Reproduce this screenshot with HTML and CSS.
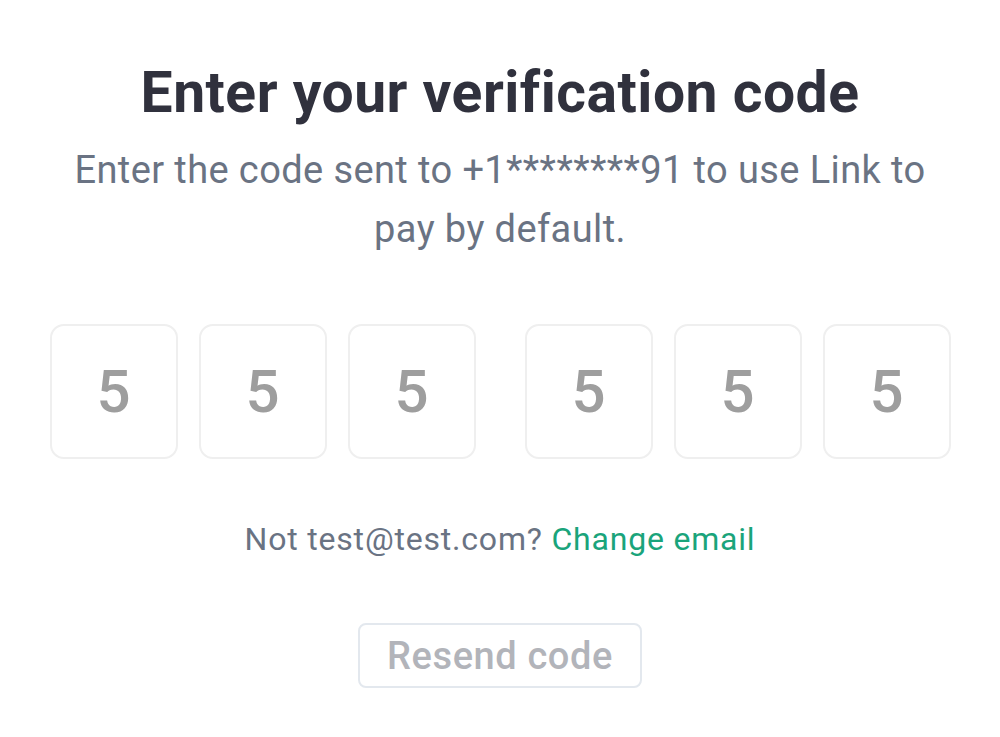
FILE: index.html
```html
<!DOCTYPE html>
<html>
<head>
<meta charset="utf-8">
<link rel="stylesheet" href="styles.css">
</head>
<body>
<main class="page">
  <h1 class="title">Enter your verification code</h1>
  <p class="subtitle">Enter the code sent to +1********91 to use Link to pay by default.</p>
  <div class="code">
    <div class="group">
      <div class="digit">5</div>
      <div class="digit">5</div>
      <div class="digit">5</div>
    </div>
    <div class="group">
      <div class="digit">5</div>
      <div class="digit">5</div>
      <div class="digit">5</div>
    </div>
  </div>
  <p class="email">Not test@test.com? <a class="link" href="#">Change email</a></p>
  <button class="resend" type="button">Resend code</button>
</main>
</body>
</html>
```
FILE: styles.css
```css
html, body {
  margin: 0;
  padding: 0;
  background: #ffffff;
}
body {
  font-family: Roboto, "Liberation Sans", sans-serif;
}
.page {
  width: 1000px;
  display: flex;
  flex-direction: column;
  align-items: center;
  padding-top: 59px;
}
.title {
  margin: 0;
  font-size: 57px;
  line-height: 67px;
  font-weight: 700;
  letter-spacing: 0.5px;
  color: #30313d;
  text-align: center;
}
.subtitle {
  margin: 15px 0 0;
  width: 880px;
  font-size: 38px;
  line-height: 59px;
  letter-spacing: 0.4px;
  color: #6a7383;
  text-align: center;
}
.code {
  margin-top: 65px;
  display: flex;
  gap: 49px;
}
.group {
  display: flex;
  gap: 21px;
}
.digit {
  box-sizing: border-box;
  width: 128px;
  height: 135px;
  border: 2px solid #efefef;
  border-radius: 14px;
  display: flex;
  align-items: center;
  justify-content: center;
  font-size: 60px;
  font-weight: 500;
  color: #9e9e9e;
}
.email {
  margin: 60px 0 0;
  font-size: 32px;
  line-height: 40px;
  letter-spacing: 0.8px;
  color: #6a7383;
}
.link {
  color: #1aa47b;
  text-decoration: none;
}
.resend {
  margin-top: 64px;
  box-sizing: border-box;
  width: 284px;
  height: 65px;
  border: 2px solid #e3e8ee;
  border-radius: 8px;
  background: #ffffff;
  font-family: Roboto, "Liberation Sans", sans-serif;
  font-size: 38px;
  font-weight: 500;
  letter-spacing: 0.6px;
  color: #b2b4ba;
  padding: 0;
}
```
